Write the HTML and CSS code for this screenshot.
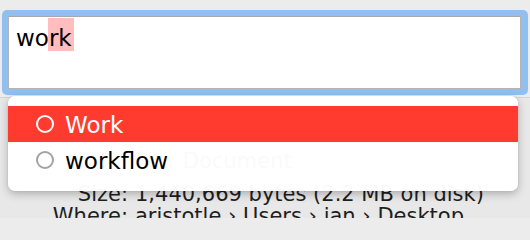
FILE: index.html
```html
<!DOCTYPE html>
<html>
<head>
<meta charset="utf-8">
<link rel="stylesheet" href="styles.css">
</head>
<body>
<div class="page">
  <div class="top">
    <div class="ring">
      <div class="input">wo<span class="sel">rk</span></div>
    </div>
  </div>
  <div class="info">
    <div class="doc">Document</div>
    <div class="grid">
      <div class="label">Size:</div><div class="value">1,440,669 bytes (2.2 MB on disk)</div>
      <div class="label">Where:</div><div class="value">aristotle › Users › jan › Desktop</div>
    </div>
  </div>
  <div class="popup">
    <div class="row active">
      <svg class="dot" width="20" height="20" viewBox="0 0 20 20"><circle cx="10" cy="10" r="8" fill="none" stroke="#ffffff" stroke-width="2"/></svg>
      <span class="name">Work</span>
    </div>
    <div class="row">
      <svg class="dot" width="20" height="20" viewBox="0 0 20 20"><circle cx="10" cy="10" r="8" fill="none" stroke="#a3a3a3" stroke-width="2"/></svg>
      <span class="name">workflow</span>
    </div>
  </div>
</div>
</body>
</html>
```

FILE: styles.css
```css
html, body {
  margin: 0;
  padding: 0;
}
body {
  background: #ececec;
  font-family: "DejaVu Sans", "Liberation Sans", sans-serif;
}
.page {
  position: relative;
  width: 530px;
  height: 218px;
  overflow: hidden;
  background: #ececec;
}
.top {
  height: 97px;
  padding: 10px 2px 0 2px;
  box-sizing: border-box;
}
.ring {
  background: #90bff1;
  border-radius: 5px;
  padding: 6px 7px 6px 6px;
  height: 85px;
  box-sizing: border-box;
}
.input {
  height: 73px;
  box-sizing: border-box;
  background: #ffffff;
  border: 1px solid #b4b4b4;
  border-top-color: #a8a8a8;
  padding: 1px 0 0 7px;
  font-size: 23px;
  color: #000;
  line-height: normal;
}
.sel {
  display: inline-block;
  background: #ffbdbd;
  padding-top: 7px;
  padding-right: 2px;
  margin-left: -1px;
  padding-left: 1px;
}
.info {
  height: 121px;
  border-top: 1px solid #d6d6d6;
  background: #e8e8e8;
  padding-top: 52px;
  box-sizing: border-box;
  font-size: 21px;
  color: #1e1e1e;
  line-height: 22.5px;
}
.doc {
  padding-left: 183px;
  margin-bottom: 10px;
  color: #2a2a2a;
}
.grid {
  display: grid;
  grid-template-columns: 128px auto;
  column-gap: 7px;
}
.label {
  text-align: right;
}
.value {
  white-space: nowrap;
}
.popup {
  position: absolute;
  left: 8px;
  top: 96px;
  width: 510px;
  height: 95px;
  box-sizing: border-box;
  padding-top: 10px;
  border-radius: 7px;
  background: rgba(255, 255, 255, 0.975);
  box-shadow: 0 3px 9px rgba(0, 0, 0, 0.25), 0 0 1px rgba(0, 0, 0, 0.25);
  font-size: 23px;
}
.row {
  display: flex;
  align-items: center;
  height: 36px;
  box-sizing: border-box;
  padding: 2px 0 0 27px;
  color: #000;
}
.row.active {
  background: #ff3b30;
  color: #ffffff;
}
.dot {
  flex: none;
  margin-right: 10px;
  margin-top: -2px;
}
.name {
  line-height: 34px;
}
```
